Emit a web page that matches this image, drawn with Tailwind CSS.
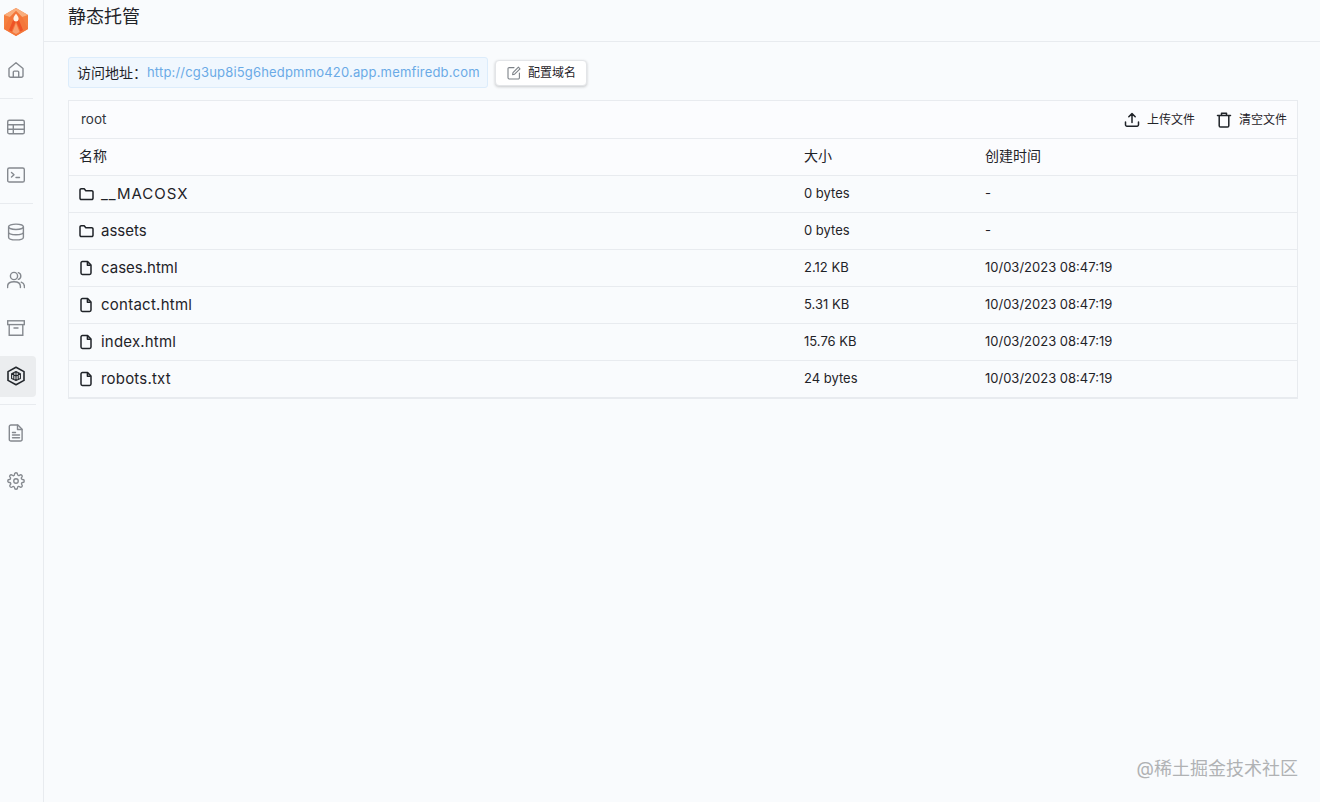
<!DOCTYPE html>
<html lang="zh">
<head>
    <meta charset="UTF-8">
    <title>静态托管</title>
    <script src="https://cdn.jsdelivr.net/npm/@tailwindcss/browser@4"></script>
</head>
<body class="relative h-[802px] w-[1320px] overflow-hidden bg-[#f9fbfd] font-['Inter','Noto_Sans_CJK_SC',sans-serif] text-[#1f2328]">
    <div class="flex h-full">
        <!-- Sidebar -->
        <aside class="flex w-[44px] shrink-0 flex-col border-r border-[#e8ebef] text-[#85898f]">
            <div class="flex h-[46px] items-start pl-[4px] pt-[8px]">
                <svg class="h-[28px] w-[24px]" viewBox="0 0 24 28">
                    <polygon points="12,0 24,7 24,21 12,28 0,21 0,7" fill="#f57f3f"/>
                    <polygon points="12,0 24,7 18,9 12,3 6,9 0,7" fill="#f9ad7c"/>
                    <polygon points="12,3 18,9 24,21 12,28 0,21 6,9" fill="#f4763a"/>
                    <polygon points="12,5 19,22 16.5,23.5 12,13 7.5,23.5 5,22" fill="#ee5226"/>
                    <polygon points="12,15 15.5,24 12,26 8.5,24" fill="#f9a070"/>
                    <path d="M12 5.5c1.8 2.4 2.6 3.9 2.6 5.3a2.6 2.6 0 0 1-5.2 0c0-1.4.8-2.9 2.6-5.3z" fill="#fff1e2"/>
                </svg>
            </div>
            <div class="flex h-[48px] w-[32px] items-center justify-center">
                <svg class="h-[18px] w-[18px]" viewBox="0 0 18 18" fill="none" stroke="currentColor" stroke-width="1.4" stroke-linejoin="round"><path d="M2 7.5 9 1.8l7 5.7v7.2a1.6 1.6 0 0 1-1.6 1.6H3.6A1.6 1.6 0 0 1 2 14.7z"/><path d="M6.3 16.3v-5.2a1 1 0 0 1 1-1h3.4a1 1 0 0 1 1 1v5.2"/></svg>
            </div>
            <div class="my-[4px] h-px w-[33px] bg-[#e8ebef]"></div>
            <div class="flex h-[48px] w-[32px] items-center justify-center">
                <svg class="h-[18px] w-[18px]" viewBox="0 0 18 18" fill="none" stroke="currentColor" stroke-width="1.4"><rect x="0.7" y="2.2" width="16.6" height="13.6" rx="1.6"/><path d="M.7 6.8h16.6M.7 11.3h16.6M6.3 6.8v9"/></svg>
            </div>
            <div class="flex h-[48px] w-[32px] items-center justify-center">
                <svg class="h-[18px] w-[18px]" viewBox="0 0 18 18" fill="none" stroke="currentColor" stroke-width="1.4" stroke-linecap="round" stroke-linejoin="round"><rect x="0.7" y="2" width="16.6" height="14" rx="1.6"/><path d="m4.5 6.5 2.5 2.3-2.5 2.3M9 11.5h3.5"/></svg>
            </div>
            <div class="my-[4px] h-px w-[33px] bg-[#e8ebef]"></div>
            <div class="flex h-[48px] w-[32px] items-center justify-center">
                <svg class="h-[18px] w-[18px]" viewBox="0 0 18 18" fill="none" stroke="currentColor" stroke-width="1.4"><ellipse cx="9" cy="3.8" rx="7.4" ry="2.7"/><path d="M1.6 3.8v10.4c0 1.5 3.3 2.7 7.4 2.7s7.4-1.2 7.4-2.7V3.8M1.6 9c0 1.5 3.3 2.7 7.4 2.7s7.4-1.2 7.4-2.7"/></svg>
            </div>
            <div class="flex h-[48px] w-[32px] items-center justify-center">
                <svg class="h-[18px] w-[18px]" viewBox="0 0 18 18" fill="none" stroke="currentColor" stroke-width="1.4" stroke-linecap="round"><circle cx="7" cy="5" r="3.6"/><path d="M.6 16.5v-1.2c0-2.8 2.6-4.6 6.4-4.6s6.4 1.8 6.4 4.6v1.2M11.4 1.6a3.6 3.6 0 0 1 0 6.8M14.2 11.2c2 .7 3.2 2.2 3.2 4.1v1.2"/></svg>
            </div>
            <div class="flex h-[48px] w-[32px] items-center justify-center">
                <svg class="h-[18px] w-[18px]" viewBox="0 0 18 18" fill="none" stroke="currentColor" stroke-width="1.4" stroke-linecap="round"><rect x="0.7" y="1.8" width="16.6" height="3.8"/><path d="M2.2 5.6v10.6h13.6V5.6M7 9h4"/></svg>
            </div>
            <div class="flex h-[48px] items-center">
                <div class="flex h-[41px] w-[36px] items-center rounded-r-[4px] bg-[#ebedef] pl-[6px] text-[#23272c]">
                    <svg class="h-[20px] w-[20px]" viewBox="0 0 20 20" fill="none" stroke="currentColor" stroke-width="1.6" stroke-linejoin="round"><polygon points="10,1.2 18,5.6 18,14.4 10,18.8 2,14.4 2,5.6"/><path d="M10 5.6 14.4 7.8v4.6L10 14.6 5.6 12.4V7.8zM10 5.6v9M5.6 7.8l4.4 2.2 4.4-2.2M7.8 6.7v6.8M12.2 6.7v6.8" stroke-width="1.1"/></svg>
                </div>
            </div>
            <div class="my-[4px] h-px w-[36px] bg-[#e8ebef]"></div>
            <div class="flex h-[48px] w-[32px] items-center justify-center">
                <svg class="h-[18px] w-[18px]" viewBox="0 0 18 18" fill="none" stroke="currentColor" stroke-width="1.4" stroke-linecap="round" stroke-linejoin="round"><path d="M3.9 1h7l4.2 4.2v10.2a1.6 1.6 0 0 1-1.6 1.6H3.9a1.6 1.6 0 0 1-1.6-1.6V2.6A1.6 1.6 0 0 1 3.9 1z"/><path d="M10.5 1.2v4.3h4.4M5.5 8.5h3M5.5 11h7M5.5 13.7h7"/></svg>
            </div>
            <div class="flex h-[48px] w-[32px] items-center justify-center">
                <svg class="h-[18px] w-[18px]" viewBox="0 0 24 24" fill="none" stroke="currentColor" stroke-width="1.8" stroke-linejoin="round"><circle cx="12" cy="12" r="3"/><path d="M19.4 15a1.65 1.65 0 0 0 .33 1.82l.06.06a2 2 0 1 1-2.83 2.83l-.06-.06a1.65 1.65 0 0 0-2.82 1.17V21a2 2 0 1 1-4 0v-.09a1.65 1.65 0 0 0-2.88-1.11l-.06.06a2 2 0 1 1-2.83-2.83l.06-.06A1.65 1.65 0 0 0 3.09 14H3a2 2 0 1 1 0-4h.09A1.65 1.65 0 0 0 4.2 7.12l-.06-.06a2 2 0 1 1 2.83-2.83l.06.06A1.65 1.65 0 0 0 10 3.09V3a2 2 0 1 1 4 0v.09a1.65 1.65 0 0 0 2.82 1.17l.06-.06a2 2 0 1 1 2.83 2.83l-.06.06A1.65 1.65 0 0 0 20.91 10H21a2 2 0 1 1 0 4h-.09a1.65 1.65 0 0 0-1.51 1z"/></svg>
            </div>
        </aside>

        <!-- Main -->
        <main class="min-w-0 flex-1">
            <header class="flex h-[42px] items-start border-b border-[#e8ebef] pl-[24px]">
                <h1 class="text-[18px] leading-[34px] font-normal">静态托管</h1>
            </header>
            <div class="pl-[24px] pr-[22px] pt-[15px]">
                <div class="flex items-center gap-[7px]">
                    <div class="flex h-[31px] w-[420px] items-center rounded-[3px] border border-[#dcecfb] bg-[#f0f7fe] pl-[8px] text-[14px]">
                        <span>访问地址：</span>
                        <span class="text-[13px] tracking-[0.18px] text-[#6aaae6]">http://cg3up8i5g6hedpmmo420.app.memfiredb.com</span>
                    </div>
                    <button class="flex h-[26px] w-[92px] items-center gap-[7px] rounded-[4px] border border-[#e3e5e8] bg-white pl-[11px] text-[12px] shadow-[0_1px_3px_rgba(0,0,0,0.2)]">
                        <svg class="h-[14px] w-[14px] text-[#7d8288]" viewBox="0 0 14 14" fill="none" stroke="currentColor" stroke-width="1.1" stroke-linecap="round" stroke-linejoin="round"><path d="M7 1.6H2.2A1.2 1.2 0 0 0 1 2.8v9a1.2 1.2 0 0 0 1.2 1.2h9a1.2 1.2 0 0 0 1.2-1.2V7"/><path d="m5.6 8.6.4-2L11.4 1.2l1.6 1.6L7.6 8.2z"/></svg>
                        <span>配置域名</span>
                    </button>
                </div>
                <div class="mt-[12px] border border-b-2 border-[#e8ebef]">
                    <div class="flex h-[38px] items-center justify-between border-b border-[#e8ebef] bg-[#fbfcfe] pl-[12px] pr-[10px] text-[14px]">
                        <span class="text-[13.5px] text-[#33373c]">root</span>
                        <div class="flex items-center text-[12px]">
                            <svg class="h-[16px] w-[16px]" viewBox="0 0 16 16" fill="none" stroke="currentColor" stroke-width="1.5" stroke-linecap="round" stroke-linejoin="round"><path d="M1.5 10v2.8a1.4 1.4 0 0 0 1.4 1.4h10.2a1.4 1.4 0 0 0 1.4-1.4V10M8 10.5V1.8M4.8 4.8 8 1.6l3.2 3.2"/></svg>
                            <span class="ml-[7px]">上传文件</span>
                            <svg class="ml-[21px] h-[16px] w-[16px]" viewBox="0 0 16 16" fill="none" stroke="currentColor" stroke-width="1.5" stroke-linecap="round" stroke-linejoin="round"><path d="M1.5 3.5h13M3.2 3.5v10.2A1.3 1.3 0 0 0 4.5 15h7a1.3 1.3 0 0 0 1.3-1.3V3.5M5.5 3.2V1.2h5v2"/></svg>
                            <span class="ml-[7px]">清空文件</span>
                        </div>
                    </div>
                    <div class="grid h-[37px] grid-cols-[725px_181px_1fr] items-center border-b border-[#e8ebef] bg-[#fbfcfe] pb-[4px] pl-[10px] text-[14px]">
                        <span>名称</span><span>大小</span><span>创建时间</span>
                    </div>
                    <div class="grid h-[37px] grid-cols-[725px_181px_1fr] items-center border-b border-[#e8ebef] pl-[10px] text-[13px]">
                        <span class="flex items-center gap-[7px] text-[15px] tracking-[0.95px]">
                            <svg class="h-[16px] w-[15px]" viewBox="0 0 15 16" fill="none" stroke="currentColor" stroke-width="1.5" stroke-linejoin="round"><path d="M1 4a1.2 1.2 0 0 1 1.2-1.2h3l1.6 2h6a1.2 1.2 0 0 1 1.2 1.2v6.3a1.2 1.2 0 0 1-1.2 1.2H2.2A1.2 1.2 0 0 1 1 12.3z"/></svg>
                            __MACOSX
                        </span>
                        <span>0 bytes</span><span>-</span>
                    </div>
                    <div class="grid h-[37px] grid-cols-[725px_181px_1fr] items-center border-b border-[#e8ebef] pl-[10px] text-[13px]">
                        <span class="flex items-center gap-[7px] text-[15px]">
                            <svg class="h-[16px] w-[15px]" viewBox="0 0 15 16" fill="none" stroke="currentColor" stroke-width="1.5" stroke-linejoin="round"><path d="M1 4a1.2 1.2 0 0 1 1.2-1.2h3l1.6 2h6a1.2 1.2 0 0 1 1.2 1.2v6.3a1.2 1.2 0 0 1-1.2 1.2H2.2A1.2 1.2 0 0 1 1 12.3z"/></svg>
                            assets
                        </span>
                        <span>0 bytes</span><span>-</span>
                    </div>
                    <div class="grid h-[37px] grid-cols-[725px_181px_1fr] items-center border-b border-[#e8ebef] pl-[10px] text-[13px]">
                        <span class="flex items-center gap-[7px] text-[15px]">
                            <svg class="h-[16px] w-[15px]" viewBox="0 0 15 16" fill="none" stroke="currentColor" stroke-width="1.5" stroke-linejoin="round"><path d="M3.4 1.6h5.2l3.4 3.4v8a1.4 1.4 0 0 1-1.4 1.4H3.4A1.4 1.4 0 0 1 2 13V3a1.4 1.4 0 0 1 1.4-1.4z"/><path d="M8.4 1.8v3.4h3.4"/></svg>
                            cases.html
                        </span>
                        <span>2.12 KB</span><span>10/03/2023 08:47:19</span>
                    </div>
                    <div class="grid h-[37px] grid-cols-[725px_181px_1fr] items-center border-b border-[#e8ebef] pl-[10px] text-[13px]">
                        <span class="flex items-center gap-[7px] text-[15px] tracking-[0.25px]">
                            <svg class="h-[16px] w-[15px]" viewBox="0 0 15 16" fill="none" stroke="currentColor" stroke-width="1.5" stroke-linejoin="round"><path d="M3.4 1.6h5.2l3.4 3.4v8a1.4 1.4 0 0 1-1.4 1.4H3.4A1.4 1.4 0 0 1 2 13V3a1.4 1.4 0 0 1 1.4-1.4z"/><path d="M8.4 1.8v3.4h3.4"/></svg>
                            contact.html
                        </span>
                        <span>5.31 KB</span><span>10/03/2023 08:47:19</span>
                    </div>
                    <div class="grid h-[37px] grid-cols-[725px_181px_1fr] items-center border-b border-[#e8ebef] pl-[10px] text-[13px]">
                        <span class="flex items-center gap-[7px] text-[15px] tracking-[0.2px]">
                            <svg class="h-[16px] w-[15px]" viewBox="0 0 15 16" fill="none" stroke="currentColor" stroke-width="1.5" stroke-linejoin="round"><path d="M3.4 1.6h5.2l3.4 3.4v8a1.4 1.4 0 0 1-1.4 1.4H3.4A1.4 1.4 0 0 1 2 13V3a1.4 1.4 0 0 1 1.4-1.4z"/><path d="M8.4 1.8v3.4h3.4"/></svg>
                            index.html
                        </span>
                        <span>15.76 KB</span><span>10/03/2023 08:47:19</span>
                    </div>
                    <div class="grid h-[36px] grid-cols-[725px_181px_1fr] items-center pl-[10px] text-[13px]">
                        <span class="flex items-center gap-[7px] text-[15px] tracking-[0.2px]">
                            <svg class="h-[16px] w-[15px]" viewBox="0 0 15 16" fill="none" stroke="currentColor" stroke-width="1.5" stroke-linejoin="round"><path d="M3.4 1.6h5.2l3.4 3.4v8a1.4 1.4 0 0 1-1.4 1.4H3.4A1.4 1.4 0 0 1 2 13V3a1.4 1.4 0 0 1 1.4-1.4z"/><path d="M8.4 1.8v3.4h3.4"/></svg>
                            robots.txt
                        </span>
                        <span>24 bytes</span><span>10/03/2023 08:47:19</span>
                    </div>
                </div>
            </div>
        </main>
    </div>
    <!-- Watermark -->
    <div class="absolute right-[22px] top-[757px] text-[18px] leading-[24px] text-[#b0b2b4]">@稀土掘金技术社区</div>
</body>
</html>
